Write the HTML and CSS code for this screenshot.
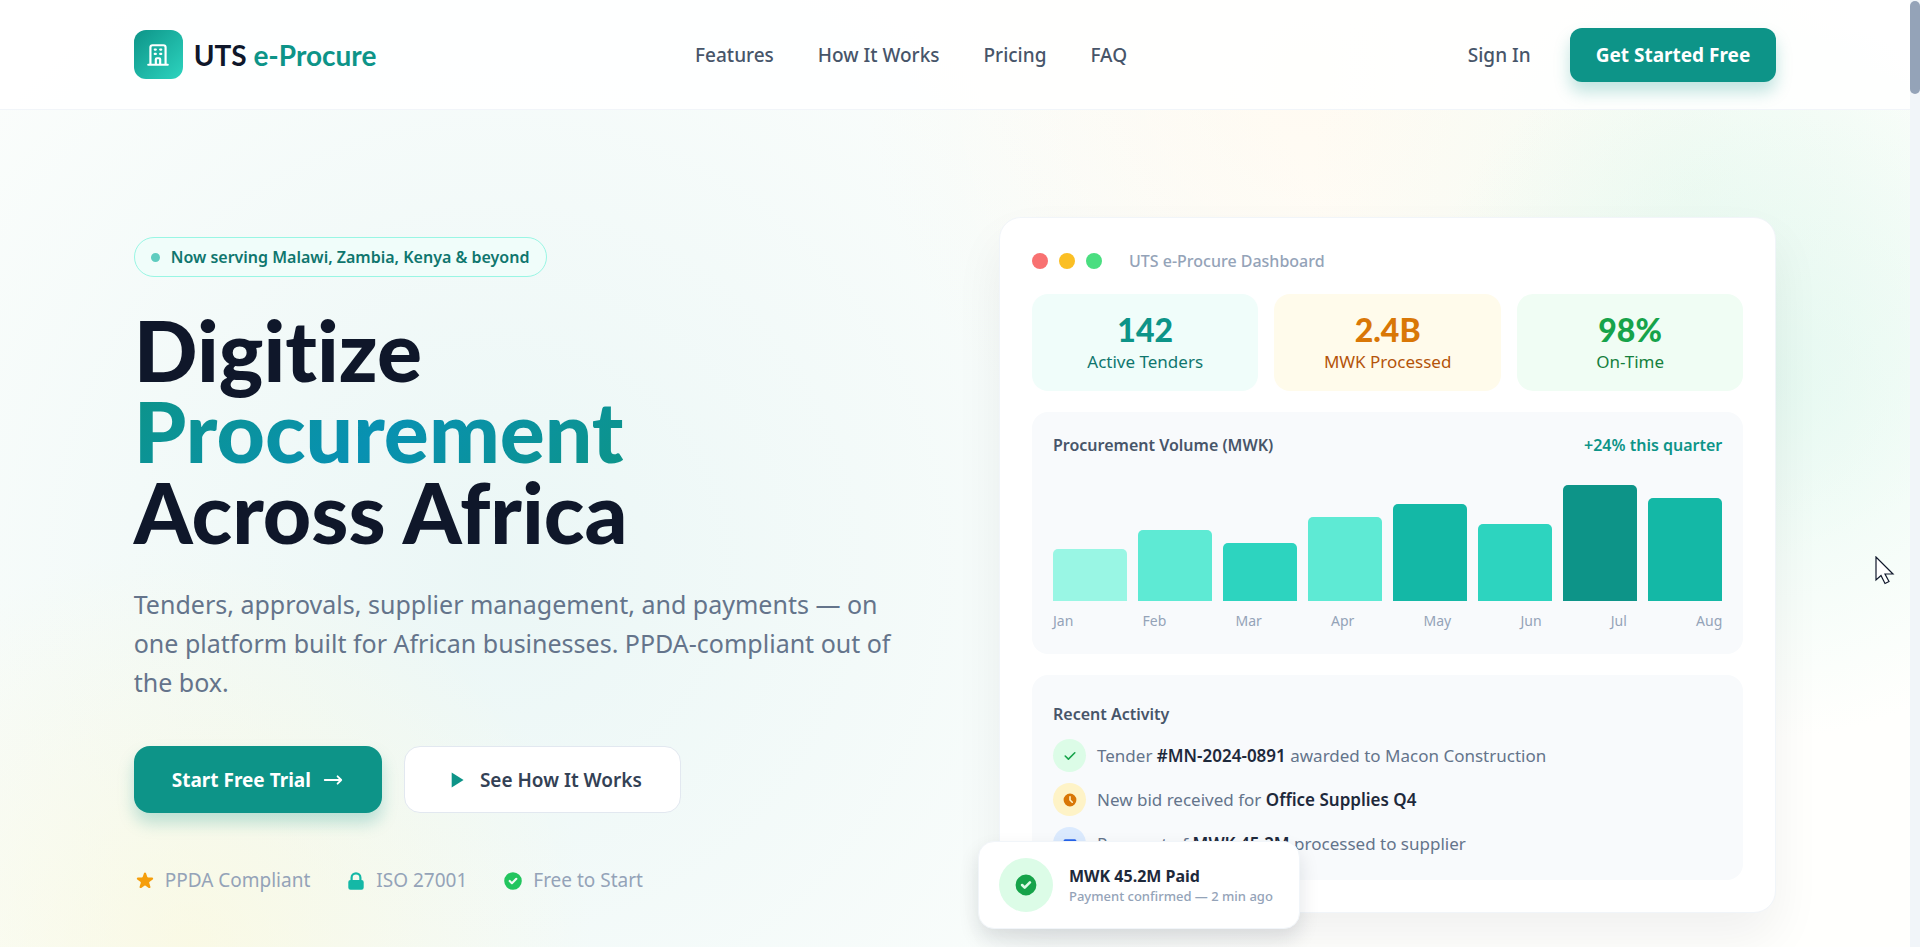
FILE: index.html
```html
<!DOCTYPE html>
<html lang="en">
<head>
  <meta charset="UTF-8">
  <meta name="viewport" content="width=device-width, initial-scale=1.0">
  <title>UTS e-Procure</title>
  <link rel="stylesheet" href="styles.css">
</head>
<body>

  <header class="header">
    <div class="container header-inner">
      <a href="#" class="brand">
        <span class="brand-icon">
          <svg width="26" height="26" viewBox="0 0 24 24" fill="none" stroke="currentColor" stroke-width="2" stroke-linecap="round" stroke-linejoin="round"><path d="M19 21V5a2 2 0 00-2-2H7a2 2 0 00-2 2v16m14 0h2m-2 0h-5m-9 0H3m2 0h5M9 7h1m-1 4h1m4-4h1m-1 4h1m-5 10v-5a1 1 0 011-1h2a1 1 0 011 1v5m-4 0h4"/></svg>
        </span>
        <span class="brand-name">UTS <span>e-Procure</span></span>
      </a>

      <nav class="nav">
        <a href="#features">Features</a>
        <a href="#how">How It Works</a>
        <a href="#pricing">Pricing</a>
        <a href="#faq">FAQ</a>
      </nav>

      <div class="header-actions">
        <a href="#signin" class="sign-in">Sign In</a>
        <button type="button" class="btn-start">Get Started Free</button>
      </div>
    </div>
  </header>

  <main class="container hero">
    <section class="hero-text">
      <div class="badge"><span class="badge-dot"></span>Now serving Malawi, Zambia, Kenya &amp; beyond</div>

      <h1>Digitize<br><span class="gradient-text">Procurement</span><br>Across Africa</h1>

      <p class="lead">Tenders, approvals, supplier management, and payments — on one platform built for African businesses. PPDA-compliant out of the box.</p>

      <div class="cta">
        <button type="button" class="btn btn-primary">
          Start Free Trial
          <svg width="22" height="22" viewBox="0 0 24 24" fill="none" stroke="currentColor" stroke-width="2" stroke-linecap="round" stroke-linejoin="round"><path d="M17 8l4 4m0 0l-4 4m4-4H3"/></svg>
        </button>
        <button type="button" class="btn btn-secondary">
          <svg width="26" height="26" viewBox="0 0 24 24" fill="currentColor"><path d="M8 5v14l11-7z"/></svg>
          See How It Works
        </button>
      </div>

      <ul class="trust">
        <li>
          <svg class="amber" width="22" height="22" viewBox="0 0 20 20" fill="currentColor"><path d="M9.049 2.927c.3-.921 1.603-.921 1.902 0l1.070 3.292a1 1 0 00.950.690h3.462c.969 0 1.371 1.240.588 1.810l-2.800 2.034a1 1 0 00-.364 1.118l1.070 3.292c.3.921-.755 1.688-1.540 1.118l-2.800-2.034a1 1 0 00-1.175 0l-2.800 2.034c-.784.570-1.838-.197-1.539-1.118l1.070-3.292a1 1 0 00-.364-1.118L2.980 8.720c-.783-.570-.380-1.810.588-1.810h3.461a1 1 0 00.951-.690l1.070-3.292z"/></svg>
          PPDA Compliant
        </li>
        <li>
          <svg class="teal" width="22" height="22" viewBox="0 0 20 20" fill="currentColor"><path fill-rule="evenodd" d="M5 9V7a5 5 0 0110 0v2a2 2 0 012 2v5a2 2 0 01-2 2H5a2 2 0 01-2-2v-5a2 2 0 012-2zm8-2v2H7V7a3 3 0 016 0z"/></svg>
          ISO 27001
        </li>
        <li>
          <svg class="green" width="22" height="22" viewBox="0 0 20 20" fill="currentColor"><path fill-rule="evenodd" d="M10 18a8 8 0 100-16 8 8 0 000 16zm3.707-9.293a1 1 0 00-1.414-1.414L9 10.586 7.707 9.293a1 1 0 00-1.414 1.414l2 2a1 1 0 001.414 0l4-4z"/></svg>
          Free to Start
        </li>
      </ul>
    </section>

    <section class="dashboard">
      <div class="window-bar">
        <span class="dot red"></span>
        <span class="dot yellow"></span>
        <span class="dot lime"></span>
        <span class="window-title">UTS e-Procure Dashboard</span>
      </div>

      <div class="stats">
        <div class="stat stat-teal"><strong>142</strong><span>Active Tenders</span></div>
        <div class="stat stat-amber"><strong>2.4B</strong><span>MWK Processed</span></div>
        <div class="stat stat-green"><strong>98%</strong><span>On-Time</span></div>
      </div>

      <div class="panel">
        <div class="panel-head">
          <h2>Procurement Volume (MWK)</h2>
          <span class="growth">+24% this quarter</span>
        </div>
        <div class="bars">
          <div class="bar t200" style="height: 40%"></div>
          <div class="bar t300" style="height: 55%"></div>
          <div class="bar t400" style="height: 45%"></div>
          <div class="bar t300" style="height: 65%"></div>
          <div class="bar t500" style="height: 75%"></div>
          <div class="bar t400" style="height: 60%"></div>
          <div class="bar t600" style="height: 90%"></div>
          <div class="bar t500" style="height: 80%"></div>
        </div>
        <div class="months">
          <span>Jan</span><span>Feb</span><span>Mar</span><span>Apr</span><span>May</span><span>Jun</span><span>Jul</span><span>Aug</span>
        </div>
      </div>

      <div class="panel panel-activity">
        <h2>Recent Activity</h2>
        <ul class="activity">
          <li>
            <span class="activity-icon ok"><svg width="16" height="16" viewBox="0 0 20 20" fill="currentColor"><path d="M16.707 5.293a1 1 0 010 1.414l-8 8a1 1 0 01-1.414 0l-4-4a1 1 0 011.414-1.414L8 12.586l7.293-7.293a1 1 0 011.414 0z"/></svg></span>
            <span>Tender <b>#MN-2024-0891</b> awarded to Macon Construction</span>
          </li>
          <li>
            <span class="activity-icon bid"><svg width="16" height="16" viewBox="0 0 20 20" fill="currentColor"><path fill-rule="evenodd" d="M10 18a8 8 0 100-16 8 8 0 000 16zm1-12a1 1 0 10-2 0v4a1 1 0 00.293.707l2.828 2.829a1 1 0 101.415-1.415L11 9.586V6z"/></svg></span>
            <span>New bid received for <b>Office Supplies Q4</b></span>
          </li>
          <li>
            <span class="activity-icon pay"><svg width="16" height="16" viewBox="0 0 20 20" fill="currentColor"><path fill-rule="evenodd" d="M4 4a2 2 0 00-2 2v1h16V6a2 2 0 00-2-2H4zm14 5H2v5a2 2 0 002 2h12a2 2 0 002-2V9z"/></svg></span>
            <span>Payment of <b>MWK 45.2M</b> processed to supplier</span>
          </li>
        </ul>
      </div>

      <div class="toast">
        <span class="toast-icon"><svg width="26" height="26" viewBox="0 0 20 20" fill="currentColor"><path fill-rule="evenodd" d="M10 18a8 8 0 100-16 8 8 0 000 16zm3.707-9.293a1 1 0 00-1.414-1.414L9 10.586 7.707 9.293a1 1 0 00-1.414 1.414l2 2a1 1 0 001.414 0l4-4z"/></svg></span>
        <div>
          <div class="toast-title">MWK 45.2M Paid</div>
          <div class="toast-sub">Payment confirmed — 2 min ago</div>
        </div>
      </div>
    </section>
  </main>

  <div class="scrollbar"><div class="thumb"></div></div>

  <svg class="cursor" width="20" height="29" viewBox="0 0 20 29"><path d="M1 1v23l5-4.500 4 8 4-2-4-7.500h8z" fill="#fff" stroke="#0f172a" stroke-width="1.200"/></svg>

</body>
</html>
```
FILE: styles.css
```css
* {
  box-sizing: border-box;
}

body {
  margin: 0;
  padding-right: 10px;
  min-height: 100vh;
  overflow: hidden;
  font-family: "Noto Sans", "Open Sans", sans-serif;
  font-size: 16px;
  color: #0f172a;
  background:
    radial-gradient(circle at 92% 40%, rgba(209, 244, 232, 0.5), transparent 360px),
    radial-gradient(circle at 88% 20%, rgba(226, 246, 232, 0.4), transparent 380px),
    radial-gradient(circle at 68% 8%, rgba(255, 243, 224, 0.4), transparent 440px),
    radial-gradient(circle at 10% 100%, rgba(252, 248, 215, 0.6), transparent 400px),
    radial-gradient(circle at 26% 60%, rgba(226, 243, 243, 0.7), transparent 900px),
    #fffffd;
}

a {
  color: inherit;
  text-decoration: none;
}

button {
  font: inherit;
  border: none;
  cursor: pointer;
}

ul {
  list-style: none;
  margin: 0;
  padding: 0;
}

svg {
  flex: none;
}

.container {
  width: 86%;
  margin: 0 auto;
}

/* header */
.header {
  height: 110px;
  background: rgba(255, 255, 255, 0.85);
  border-bottom: 1px solid #f1f5f9;
}

.header-inner {
  height: 100%;
  display: flex;
  align-items: center;
  justify-content: space-between;
}

.brand {
  display: flex;
  align-items: center;
  gap: 11px;
  font-family: Lato, sans-serif;
  font-size: 28px;
  font-weight: 700;
}

.brand-icon {
  width: 49px;
  height: 49px;
  border-radius: 12px;
  display: flex;
  align-items: center;
  justify-content: center;
  color: #fff;
  background: linear-gradient(135deg, #0d9488, #2dd4bf);
}

.brand-name span {
  color: #0d9488;
}

.nav {
  display: flex;
  gap: 44px;
}

.nav a, .sign-in {
  font-size: 19px;
  line-height: 28px;
  font-weight: 500;
  color: #475569;
}

.header-actions {
  display: flex;
  align-items: center;
  gap: 39px;
  padding-left: 22px;
}

.btn-start {
  height: 54px;
  padding: 0 26px;
  border-radius: 12px;
  background: #0d9488;
  color: #fff;
  font-size: 19px;
  font-weight: 700;
  box-shadow: 0 10px 16px rgba(13, 148, 136, 0.25);
}

/* hero */
.hero {
  padding-top: 107px;
  display: grid;
  grid-template-columns: 1fr 1fr;
  gap: 88px;
}

.hero-text {
  padding-top: 20px;
}

.badge {
  display: inline-flex;
  align-items: center;
  gap: 11px;
  height: 40px;
  padding: 0 17px 0 16px;
  border: 1px solid #99f6e4;
  border-radius: 20px;
  background: #f0fdfa;
  color: #0f766e;
  font-size: 16px;
  font-weight: 600;
}

.badge-dot {
  width: 9px;
  height: 9px;
  border-radius: 50%;
  background: #5eccbf;
}

h1 {
  margin: 32px 0 33px;
  font-family: Lato, sans-serif;
  font-size: 84px;
  font-weight: 900;
  line-height: 81px;
  font-variant-ligatures: none;
}

.gradient-text {
  background: linear-gradient(135deg, #0d9488, #0891b2, #0d9488);
  -webkit-background-clip: text;
  background-clip: text;
  color: transparent;
}

.lead {
  margin: 0 0 44px;
  font-size: 25px;
  line-height: 39px;
  color: #64748b;
}

.cta {
  display: flex;
  gap: 22px;
}

.btn {
  display: flex;
  align-items: center;
  gap: 11px;
  height: 67px;
  padding: 0 38px;
  border-radius: 16px;
  font-size: 19px;
}

.btn-primary {
  background: #0d9488;
  color: #fff;
  font-weight: 700;
  box-shadow: 0 10px 16px rgba(13, 148, 136, 0.25);
}

.btn-secondary {
  background: #fff;
  border: 1px solid #e2e8f0;
  color: #334155;
  font-weight: 600;
}

.btn-secondary svg {
  color: #0d9488;
}

.trust {
  display: flex;
  gap: 35px;
  margin-top: 54px;
  font-size: 19px;
  line-height: 27px;
  color: #94a3b8;
}

.trust li {
  display: flex;
  align-items: center;
  gap: 9px;
}

.amber { color: #f59e0b; }
.teal { color: #14b8a6; }
.green { color: #22c55e; }

/* dashboard card */
.dashboard {
  position: relative;
  align-self: start;
  padding: 32px;
  border: 1px solid #f1f5f9;
  border-radius: 22px;
  background: #fff;
  box-shadow: 0 25px 50px rgba(15, 23, 42, 0.06);
}

.window-bar {
  display: flex;
  align-items: center;
  gap: 11px;
  height: 21px;
  margin-bottom: 23px;
}

.dot {
  width: 16px;
  height: 16px;
  border-radius: 50%;
}

.red { background: #f87171; }
.yellow { background: #fbbf24; }
.lime { background: #4ade80; }

.window-title {
  margin-left: 16px;
  font-weight: 500;
  color: #94a3b8;
}

.stats {
  display: grid;
  grid-template-columns: repeat(3, 1fr);
  gap: 16px;
}

.stat {
  height: 97px;
  border-radius: 16px;
  display: flex;
  flex-direction: column;
  align-items: center;
  justify-content: center;
}

.stat strong {
  font-family: Lato, sans-serif;
  font-size: 32px;
  font-weight: 900;
  line-height: 38px;
}

.stat span {
  font-size: 17px;
  line-height: 26px;
}

.stat-teal { background: #f0fdfa; color: #0f766e; }
.stat-amber { background: #fffbeb; color: #b45309; }
.stat-green { background: #f0fdf4; color: #15803d; }
.stat-teal strong { color: #0d9488; }
.stat-amber strong { color: #d97706; }
.stat-green strong { color: #16a34a; }

.panel {
  margin-top: 21px;
  padding: 21px 21px 23px;
  border-radius: 16px;
  background: #f8fafc;
}

.panel h2 {
  margin: 0;
  font-size: 16px;
  font-weight: 600;
  line-height: 24px;
  color: #475569;
}

.panel-head {
  display: flex;
  justify-content: space-between;
}

.growth {
  line-height: 24px;
  font-weight: 600;
  color: #0d9488;
}

.bars {
  display: flex;
  align-items: flex-end;
  gap: 11px;
  height: 129px;
  margin-top: 15px;
}

.bar {
  flex: 1;
  border-radius: 5px 5px 0 0;
}

.t200 { background: #99f6e4; }
.t300 { background: #5eead4; }
.t400 { background: #2dd4bf; }
.t500 { background: #14b8a6; }
.t600 { background: #0d9488; }

.months {
  display: flex;
  justify-content: space-between;
  margin-top: 10px;
  font-size: 14px;
  line-height: 20px;
  color: #94a3b8;
}

.panel-activity {
  padding: 27px 21px 20px;
}

.activity {
  display: flex;
  flex-direction: column;
  gap: 11px;
  margin-top: 13px;
  font-size: 17px;
  line-height: 26px;
  color: #64748b;
}

.activity li {
  display: flex;
  align-items: center;
  gap: 11px;
}

.activity b {
  font-weight: 600;
  color: #1e293b;
}

.activity-icon {
  width: 33px;
  height: 33px;
  border-radius: 50%;
  display: flex;
  align-items: center;
  justify-content: center;
}

.ok { background: #dcfce7; color: #16a34a; }
.bid { background: #fef3c7; color: #d97706; }
.pay { background: #dbeafe; color: #2563eb; }

.toast {
  position: absolute;
  left: -22px;
  bottom: -17px;
  display: flex;
  align-items: center;
  gap: 16px;
  height: 88px;
  padding: 0 26px 0 20px;
  border: 1px solid #f1f5f9;
  border-radius: 16px;
  background: #fff;
  box-shadow: 0 10px 20px rgba(15, 23, 42, 0.12);
}

.toast-icon {
  width: 54px;
  height: 54px;
  border-radius: 50%;
  display: flex;
  align-items: center;
  justify-content: center;
  background: #dcfce7;
  color: #16a34a;
}

.toast-title {
  font-weight: 700;
  line-height: 22px;
  color: #1e293b;
}

.toast-sub {
  font-size: 13px;
  font-weight: 500;
  line-height: 18px;
  color: #94a3b8;
}

/* page scrollbar and pointer */
.scrollbar {
  position: fixed;
  top: 0;
  right: 0;
  width: 10px;
  height: 100vh;
  background: #f1f5f9;
}

.thumb {
  height: 93px;
  margin-top: 1px;
  border-radius: 5px;
  background: #94a3b8;
}

.cursor {
  position: fixed;
  top: 556px;
  right: 25px;
}
```
